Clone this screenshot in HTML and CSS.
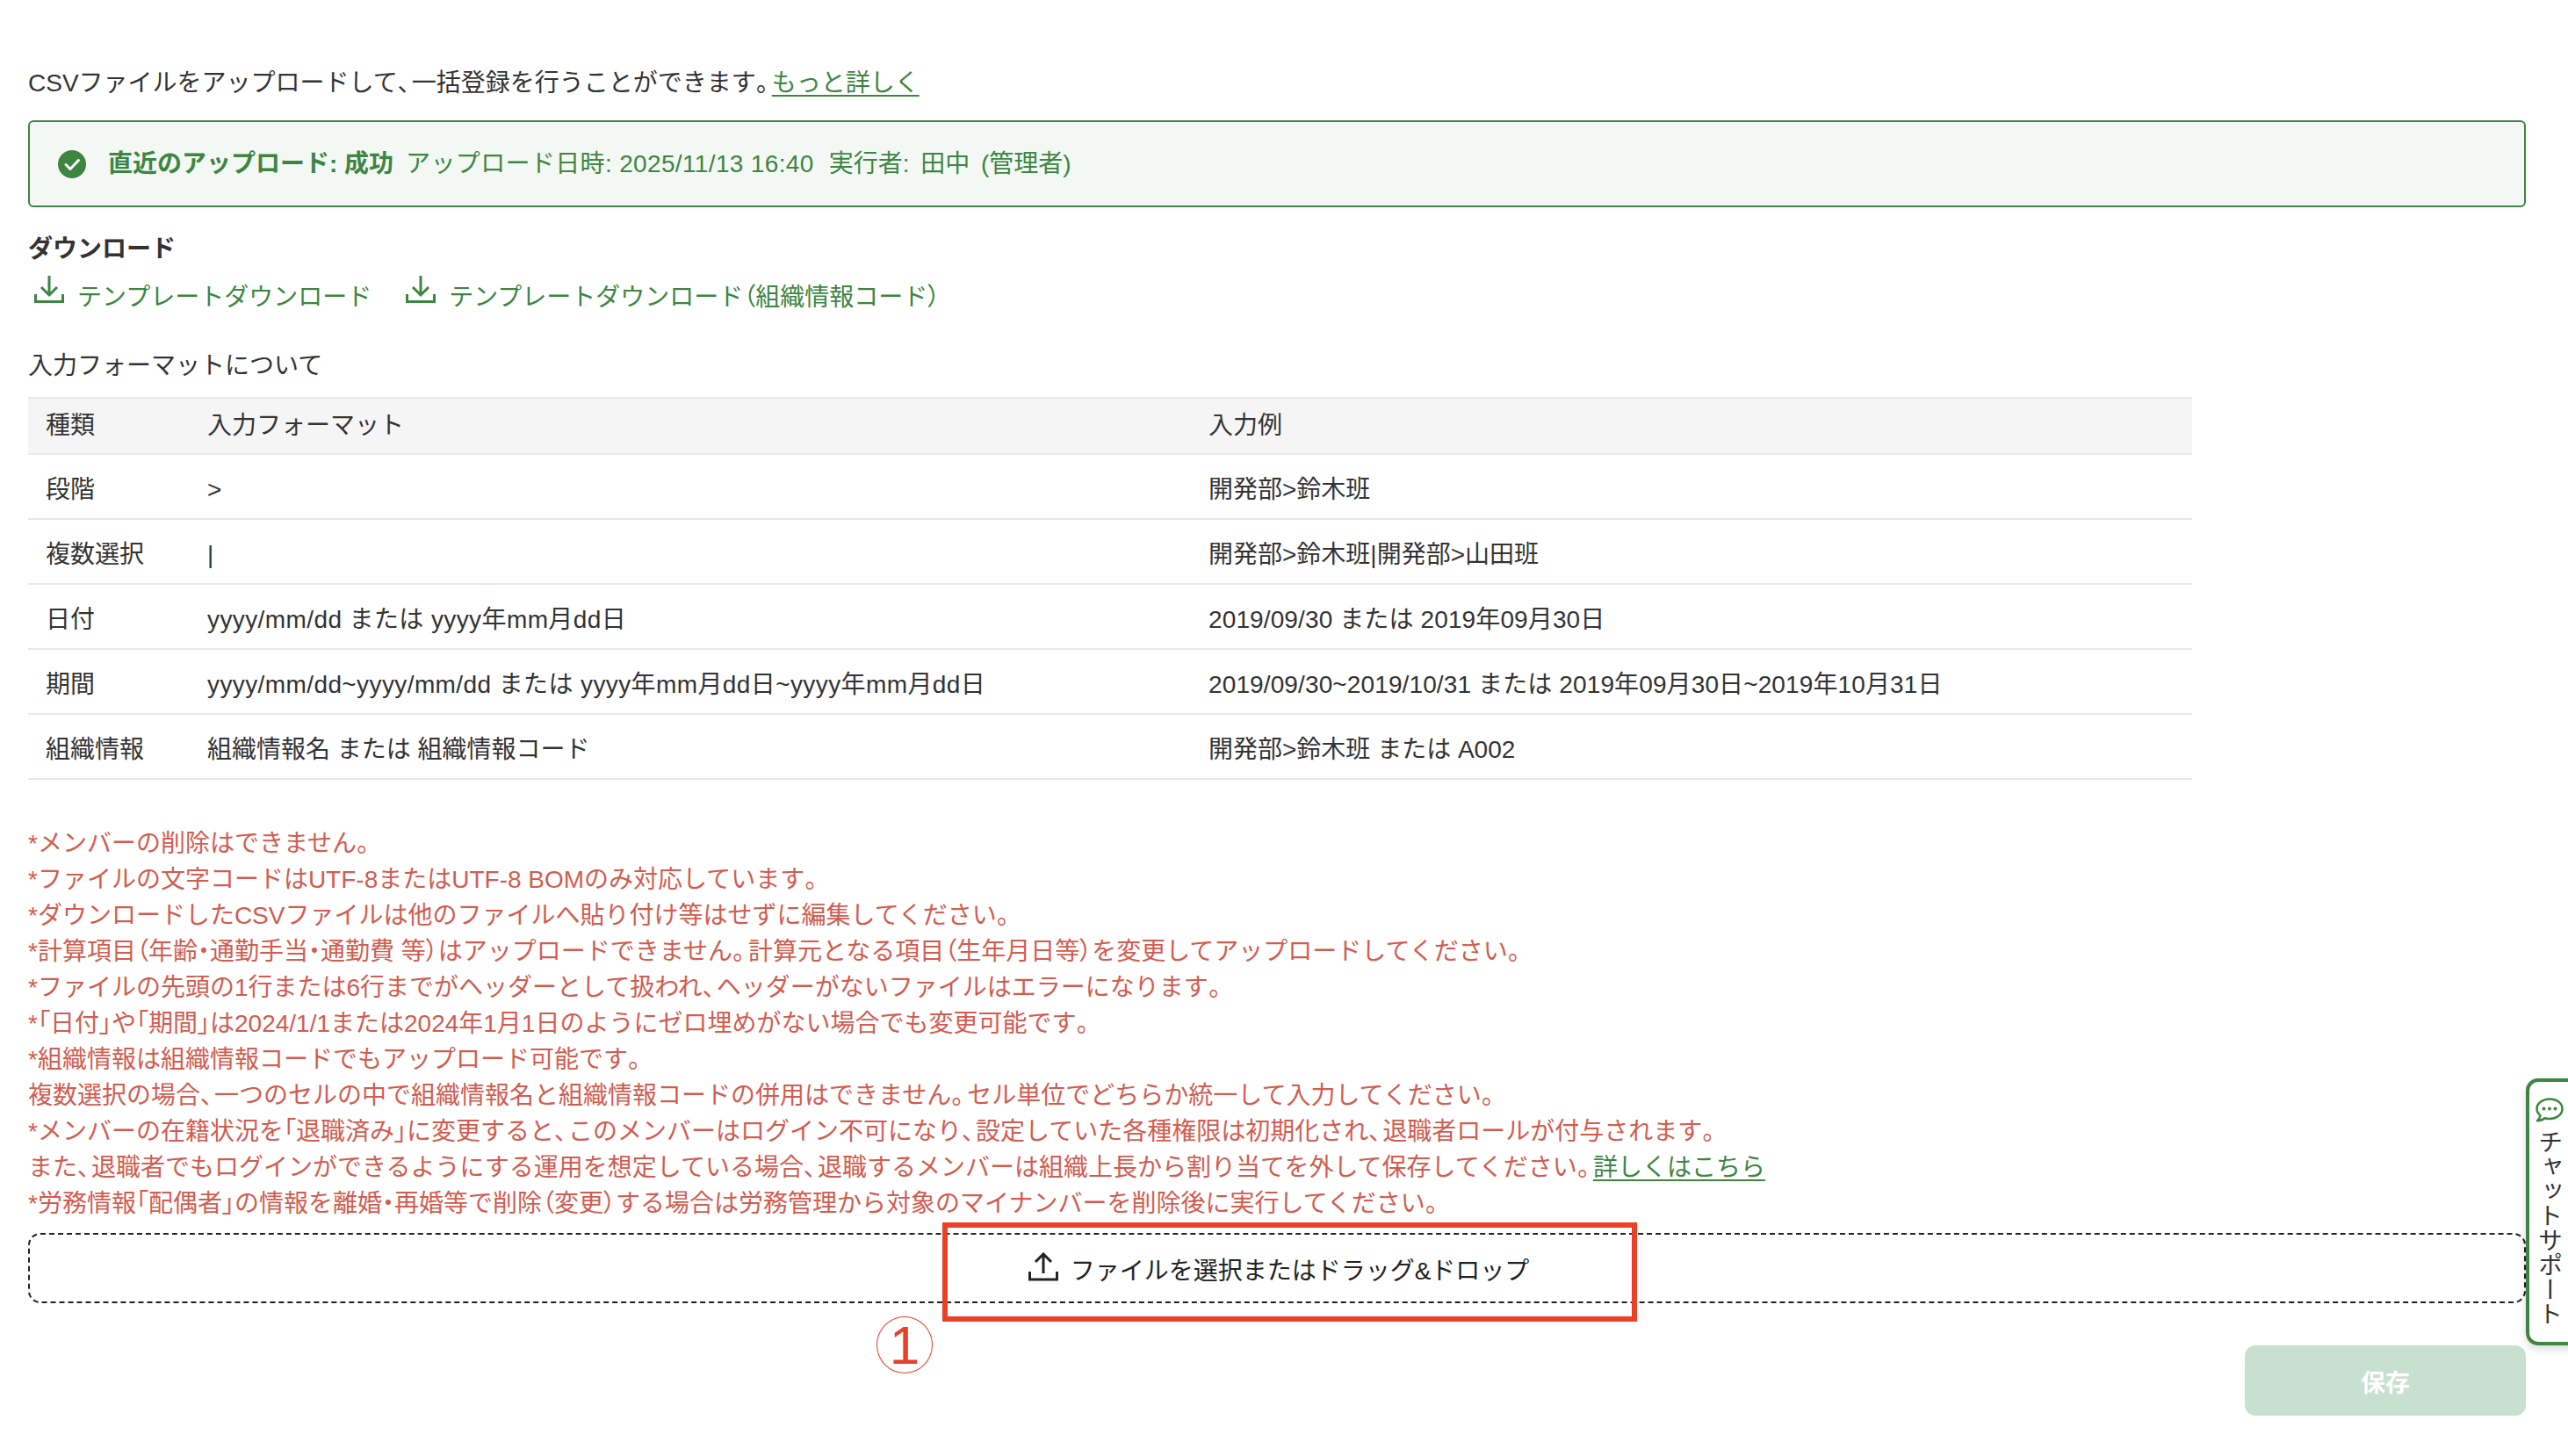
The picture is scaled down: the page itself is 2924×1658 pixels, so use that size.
FILE: index.html
```html
<!DOCTYPE html>
<html lang="ja">
<head>
<meta charset="utf-8">
<title>CSVアップロード</title>
<link rel="stylesheet" href="styles.css">
</head>
<body>
<main class="page">
  <p class="intro">CSVファイルをアップロードして<span class="pc">、</span>一括登録を行うことができます<span class="pe">。</span><a class="link" href="#">もっと詳しく</a></p>

  <div class="banner">
    <svg class="check" viewBox="0 0 32 32"><circle cx="16" cy="16" r="16" fill="#3d8541"/><path d="M9 16.500l5 5 9.500-10" fill="none" stroke="#fff" stroke-width="3" stroke-linecap="round" stroke-linejoin="round"/></svg>
    <strong class="banner-title">直近のアップロード: 成功</strong>
    <span class="banner-date">アップロード日時: 2025/11/13 16:40</span>
    <span class="banner-user">実行者: 田中 (管理者)</span>
  </div>

  <h2 class="heading">ダウンロード</h2>
  <div class="downloads">
    <a class="dl" href="#">
      <svg class="dl-icon" viewBox="0 0 34 33"><path d="M17 1v21M8 14l9 9 9-9M1.500 22v8.500h31V22" fill="none" stroke="#3d8541" stroke-width="3"/></svg>
      <span>テンプレートダウンロード</span>
    </a>
    <a class="dl" href="#">
      <svg class="dl-icon" viewBox="0 0 34 33"><path d="M17 1v21M8 14l9 9 9-9M1.500 22v8.500h31V22" fill="none" stroke="#3d8541" stroke-width="3"/></svg>
      <span>テンプレートダウンロード<span class="pt">（</span>組織情報コード<span class="pt">）</span></span>
    </a>
  </div>

  <p class="format-title">入力フォーマットについて</p>
  <table class="format">
    <colgroup><col class="c1"><col class="c2"><col class="c3"></colgroup>
    <thead>
      <tr><th>種類</th><th>入力フォーマット</th><th>入力例</th></tr>
    </thead>
    <tbody>
      <tr><td>段階</td><td>&gt;</td><td>開発部&gt;鈴木班</td></tr>
      <tr><td>複数選択</td><td>|</td><td>開発部&gt;鈴木班|開発部&gt;山田班</td></tr>
      <tr><td>日付</td><td class="fmt">yyyy/mm/dd または yyyy年mm月dd日</td><td class="ex">2019/09/30 または 2019年09月30日</td></tr>
      <tr><td>期間</td><td class="fmt">yyyy/mm/dd~yyyy/mm/dd または yyyy年mm月dd日~yyyy年mm月dd日</td><td class="ex">2019/09/30~2019/10/31 または 2019年09月30日~2019年10月31日</td></tr>
      <tr><td>組織情報</td><td>組織情報名 または 組織情報コード</td><td>開発部&gt;鈴木班 または A002</td></tr>
    </tbody>
  </table>

  <div class="notes">
    <p>*メンバーの削除はできません<span class="pe">。</span></p>
    <p>*ファイルの文字コードはUTF-8またはUTF-8 BOMのみ対応しています<span class="pe">。</span></p>
    <p>*ダウンロードしたCSVファイルは他のファイルへ貼り付け等はせずに編集してください<span class="pe">。</span></p>
    <p>*計算項目<span class="pt">（</span>年齢<span class="pt">・</span>通勤手当<span class="pt">・</span>通勤費 等<span class="pt">）</span>はアップロードできません<span class="pe">。</span>計算元となる項目<span class="pt">（</span>生年月日等<span class="pt">）</span>を変更してアップロードしてください<span class="pe">。</span></p>
    <p>*ファイルの先頭の1行または6行までがヘッダーとして扱われ<span class="pc">、</span>ヘッダーがないファイルはエラーになります<span class="pe">。</span></p>
    <p>*<span class="pt">「</span>日付<span class="pt">」</span>や<span class="pt">「</span>期間<span class="pt">」</span>は2024/1/1または2024年1月1日のようにゼロ埋めがない場合でも変更可能です<span class="pe">。</span></p>
    <p>*組織情報は組織情報コードでもアップロード可能です<span class="pe">。</span></p>
    <p>複数選択の場合<span class="pc">、</span>一つのセルの中で組織情報名と組織情報コードの併用はできません<span class="pe">。</span>セル単位でどちらか統一して入力してください<span class="pe">。</span></p>
    <p>*メンバーの在籍状況を<span class="pt">「</span>退職済み<span class="pt">」</span>に変更すると<span class="pc">、</span>このメンバーはログイン不可になり<span class="pc">、</span>設定していた各種権限は初期化され<span class="pc">、</span>退職者ロールが付与されます<span class="pe">。</span></p>
    <p>また<span class="pc">、</span>退職者でもログインができるようにする運用を想定している場合<span class="pc">、</span>退職するメンバーは組織上長から割り当てを外して保存してください<span class="pe">。</span><a class="link" href="#">詳しくはこちら</a></p>
    <p>*労務情報<span class="pt">「</span>配偶者<span class="pt">」</span>の情報を離婚<span class="pt">・</span>再婚等で削除<span class="pt">（</span>変更<span class="pt">）</span>する場合は労務管理から対象のマイナンバーを削除後に実行してください<span class="pe">。</span></p>
  </div>

  <div class="dropzone">
    <svg class="up-icon" viewBox="0 0 34 33"><path d="M17 24V3M8 11l9-9 9 9M1.500 22v9h31v-9" fill="none" stroke="#222" stroke-width="3"/></svg>
    <span class="drop-label">ファイルを選択またはドラッグ&amp;ドロップ</span>
  </div>

  <div class="actions"><button class="save" type="button">保存</button></div>
</main>

<div class="annot-box"></div>
<div class="annot-num">1</div>

<aside class="chat">
  <svg class="chat-icon" viewBox="0 0 32 28"><path d="M16 1.500C8 1.500 1.500 6.500 1.500 12.500c0 3 1.500 5.700 4 7.700-.4 2.200-1.600 4.400-3.500 6 3.500 0 6.500-1.200 8.500-3 1.700.5 3.500.8 5.500.8 8 0 14.500-5 14.500-11.500S24 1.500 16 1.500z" fill="none" stroke="#3d8541" stroke-width="2.500" stroke-linejoin="round"/><circle cx="9.500" cy="12.500" r="2" fill="#3d8541"/><circle cx="16" cy="12.500" r="2" fill="#3d8541"/><circle cx="22.500" cy="12.500" r="2" fill="#3d8541"/></svg>
  <span class="chat-label">チャットサポート</span>
</aside>
</body>
</html>
```
FILE: styles.css
```css
* { box-sizing: border-box; }
html, body { margin: 0; padding: 0; background: #fff; }
body {
  width: 2924px;
  height: 1658px;
  overflow: hidden;
  position: relative;
  color: #333;
  font-family: "Liberation Sans", "Noto Sans CJK JP", sans-serif;
  font-size: 28px;
  line-height: 42px;
}
.page { padding: 74px 48px 0 32px; }
p { margin: 0; }
.pt { font-feature-settings: "palt"; }
.pc { font-feature-settings: "palt"; letter-spacing: 2px; }
.pe { font-feature-settings: "palt"; letter-spacing: 4px; }
.link { color: #3d8541; text-decoration: underline; text-underline-offset: 4px; text-decoration-thickness: 2px; }

.banner {
  margin-top: 21px;
  height: 99px;
  display: flex;
  align-items: center;
  gap: 17px;
  padding-left: 32px;
  border: 2px solid #3d8541;
  border-radius: 6px;
  background: #f3f8f4;
  color: #3d8541;
}
.check { width: 32px; height: 32px; margin-right: 8px; flex: none; }
.banner-title { font-weight: 700; margin-right: -3px; }
.banner-date { letter-spacing: .35px; }
.banner-user { word-spacing: 5px; }

.heading { margin: 27px 0 0; font-size: 28px; line-height: 42px; font-weight: 700; }
.downloads { margin-top: 13px; display: flex; gap: 39px; padding-left: 7px; }
.dl { display: flex; align-items: center; gap: 15px; color: #3d8541; text-decoration: none; }
.dl-icon { width: 34px; height: 33px; flex: none; margin-top: -20px; }

.format-title { margin-top: 36px; }
.format {
  margin-top: 14px;
  width: 2464px;
  table-layout: fixed;
  border-collapse: separate;
  border-spacing: 0;
}
.c1 { width: 184px; }
.c2 { width: 1140px; }
.c3 { width: 1140px; }
.format th, .format td {
  padding: 8px 20px 0;
  text-align: left;
  font-weight: 400;
  height: 74px;
  border-bottom: 2px solid #e8e8e8;
}
.format th {
  padding-top: 0;
  height: 66px;
  background: #f5f5f5;
  border-top: 2px solid #e8e8e8;
}
.format .fmt { letter-spacing: .4px; }
.format .ex { letter-spacing: .12px; }

.notes { margin-top: 52px; color: #d25c4f; line-height: 41px; }
.dropzone {
  margin-top: 13px;
  height: 80px;
  display: flex;
  align-items: center;
  justify-content: center;
  gap: 14px;
  padding-left: 4px;
  border: 2px dashed #222;
  border-radius: 14px;
  color: #222;
}
.up-icon { width: 34px; height: 33px; flex: none; margin-top: -4px; }
.drop-label { margin-top: 7px; }

.actions { margin-top: 48px; display: flex; justify-content: flex-end; }
.save {
  width: 320px;
  height: 80px;
  border: 0;
  border-radius: 12px;
  padding: 8px 0 0;
  background: #c7e0cf;
  color: #fff;
  font: inherit;
  font-weight: 700;
}

.annot-box {
  position: absolute;
  left: 1073px;
  top: 1392px;
  width: 791px;
  height: 113px;
  border: 6px solid #ea4026;
}
.annot-num {
  position: absolute;
  left: 998px;
  top: 1499px;
  width: 64px;
  height: 65px;
  border: 1.5px solid #ea4026;
  border-radius: 50%;
  display: flex;
  align-items: center;
  justify-content: center;
  font-size: 62px;
  line-height: 62px;
  color: #ea4026;
}

.chat {
  position: absolute;
  left: 2876px;
  top: 1228px;
  width: 60px;
  height: 304px;
  border: 4px solid #3d8541;
  border-radius: 14px 0 0 14px;
  background: #fff;
  box-shadow: 0 4px 10px rgba(0,0,0,.15);
  display: flex;
  flex-direction: column;
  align-items: flex-start;
  padding: 18px 0 0 7px;
}
.chat-icon { width: 32px; height: 28px; flex: none; }
.chat-label {
  margin-top: 8px;
  margin-left: -3px;
  width: 34px;
  writing-mode: vertical-rl;
  font-size: 28px;
  line-height: 34px;
}
```
